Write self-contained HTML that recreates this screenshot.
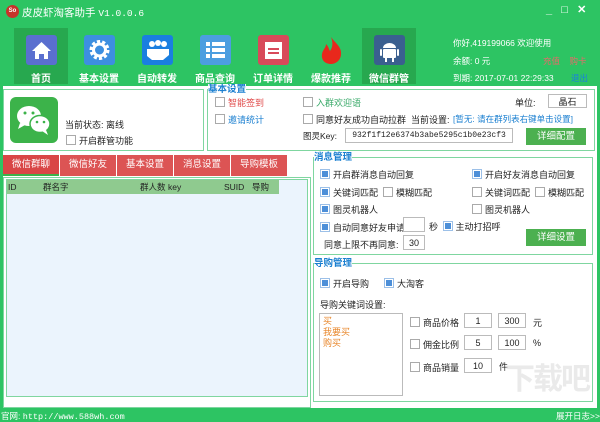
<!DOCTYPE html>
<html><head><meta charset="utf-8"><style>
*{margin:0;padding:0;box-sizing:border-box}
body{width:600px;height:422px;overflow:hidden;background:#2dc463;font-family:"Liberation Sans","Noto Sans CJK SC",sans-serif;font-size:9px;color:#222;position:relative;white-space:nowrap}
.a{position:absolute}
.w{color:#fff}
.nav{position:absolute;top:28px;width:54px;height:56px;text-align:center;color:#fff;font-size:10px;font-weight:bold}
.nav .ic{position:absolute;left:12px;top:7px;width:31px;height:30px;border-radius:3px}
.nav .lb{position:absolute;left:0;width:54px;top:42px}
.box{position:absolute;border:1px solid #7fd6a0;background:#fff}
.cb{display:inline-block;width:10px;height:10px;border:1px solid #aaa;background:#fff;vertical-align:-1px;margin-right:3px}
.cb.on{border-color:#9cc0e8;background:#4d8fd8;box-shadow:inset 0 0 0 1px #fff}
.inp{position:absolute;border:1px solid #bbb;background:#fff;text-align:center;font-size:9px;line-height:14px}
.btn{position:absolute;background:#4cb050;color:#fff;text-align:center;font-size:9.5px}
.tab{position:absolute;top:155px;height:21px;width:56px;background:#dc5454;color:#fff;text-align:center;line-height:20px;font-size:9.5px}
.tt{position:absolute;color:#1a7fd0;font-weight:bold;font-size:9.5px;background:#fff;line-height:11px}
</style></head><body>
<div class="a" style="left:6px;top:5px;width:13px;height:13px;border-radius:50%;background:#c8322a;color:#fff;font-size:6px;line-height:13px;text-align:center;font-weight:bold">So</div>
<div class="a w" style="left:22px;top:5px;font-size:10.5px">皮皮虾淘客助手 <span style="font-family:'Liberation Mono',monospace;font-size:9.5px">V1.0.0.6</span></div>
<div class="a w" style="left:546px;top:3px;font-size:11px;font-weight:bold">_&nbsp;&nbsp;&nbsp;□&nbsp;&nbsp;&nbsp;✕</div>

<div class="nav" style="left:14px;background:#27a84f"><div class="ic" style="background:#5a6fcf"><svg width="31" height="30"><path d="M15.5 7 L25 16 L22 16 L22 24 L18 24 L18 19 L13 19 L13 24 L9 24 L9 16 L6 16 Z" fill="#fff"/></svg></div><div class="lb">首页</div></div>
<div class="nav" style="left:72px"><div class="ic" style="background:#3d8fe0"><svg width="31" height="30"><circle cx="15.5" cy="15" r="8" fill="none" stroke="#fff" stroke-width="4" stroke-dasharray="3 2"/><circle cx="15.5" cy="15" r="6" fill="none" stroke="#fff" stroke-width="3"/></svg></div><div class="lb">基本设置</div></div>
<div class="nav" style="left:130px"><div class="ic" style="background:#1a7fe0"><svg width="31" height="30"><circle cx="10" cy="9" r="3" fill="#fff"/><circle cx="16" cy="8" r="3" fill="#fff"/><circle cx="22" cy="9" r="3" fill="#fff"/><path d="M5 14h22v6l-6 5H10l-5-4z" fill="#fff"/></svg></div><div class="lb">自动转发</div></div>
<div class="nav" style="left:188px"><div class="ic" style="background:#4c9ee0"><svg width="31" height="30"><rect x="6" y="7" width="4" height="4" fill="#fff"/><rect x="12" y="7" width="13" height="4" fill="#fff"/><rect x="6" y="13" width="4" height="4" fill="#fff"/><rect x="12" y="13" width="13" height="4" fill="#fff"/><rect x="6" y="19" width="4" height="4" fill="#fff"/><rect x="12" y="19" width="13" height="4" fill="#fff"/></svg></div><div class="lb">商品查询</div></div>
<div class="nav" style="left:246px"><div class="ic" style="background:#d84a5a"><svg width="31" height="30"><rect x="7" y="7" width="17" height="17" fill="#fff"/><rect x="10" y="13" width="11" height="2" fill="#d84a5a"/><rect x="10" y="17" width="11" height="2" fill="#d84a5a"/></svg></div><div class="lb">订单详情</div></div>
<div class="nav" style="left:304px"><div class="ic" style="background:none"><svg width="31" height="30"><path d="M15 2 C20 9 26 12 25 20 C24 27 18 29 15 29 C10 29 5 26 6 19 C7 14 10 13 10 9 C13 12 13 15 14 16 C17 12 17 7 15 2Z" fill="#e8281c"/></svg></div><div class="lb">爆款推荐</div></div>
<div class="nav" style="left:362px;background:#27a84f"><div class="ic" style="background:#3a5f8f"><svg width="31" height="30"><path d="M9 13a6.5 5 0 0 1 13 0z" fill="#fff"/><rect x="9" y="14" width="13" height="9" rx="1" fill="#fff"/><rect x="6" y="14" width="2" height="7" rx="1" fill="#fff"/><rect x="23" y="14" width="2" height="7" rx="1" fill="#fff"/><rect x="11" y="23" width="2" height="4" fill="#fff"/><rect x="18" y="23" width="2" height="4" fill="#fff"/></svg></div><div class="lb">微信群管</div></div>

<div class="a w" style="left:453px;top:37px;font-size:8.5px">你好,419199066 欢迎使用</div>
<div class="a w" style="left:453px;top:55px;font-size:8.5px">余额: 0 元</div>
<div class="a" style="left:543px;top:55px;font-size:8.5px;color:#e86a6a">充值&nbsp;&nbsp;&nbsp;&nbsp;购卡</div>
<div class="a w" style="left:453px;top:72px;font-size:8.5px">到期: 2017-07-01 22:29:33</div>
<div class="a" style="left:571px;top:72px;font-size:8.5px;color:#1a7fe0">退出</div>

<div class="a" style="left:3px;top:86px;width:594px;height:322px;background:#fff"></div>

<div class="box" style="left:3px;top:89px;width:201px;height:62px"></div>
<div class="a" style="left:10px;top:97px;width:48px;height:46px;background:#3cb34a;border-radius:6px"><svg width="48" height="46"><ellipse cx="19" cy="19" rx="12" ry="10" fill="#fff"/><path d="M10 26 L8 32 L15 28z" fill="#fff"/><ellipse cx="30" cy="27" rx="10" ry="8.5" fill="#fff" stroke="#3cb34a" stroke-width="1.5"/><path d="M36 33 L38 38 L32 34z" fill="#fff"/><circle cx="15" cy="16" r="1.5" fill="#3cb34a"/><circle cx="23" cy="16" r="1.5" fill="#3cb34a"/><circle cx="27" cy="25" r="1.3" fill="#3cb34a"/><circle cx="34" cy="25" r="1.3" fill="#3cb34a"/></svg></div>
<div class="a" style="left:65px;top:118px">当前状态: 离线</div>
<div class="a" style="left:66px;top:134px"><span class="cb"></span>开启群管功能</div>

<div class="box" style="left:207px;top:89px;width:388px;height:62px"></div>
<div class="tt" style="left:208px;top:84px">基本设置</div>
<div class="a" style="left:215px;top:96px;color:#e04848"><span class="cb"></span>智能签到</div>
<div class="a" style="left:215px;top:113px;color:#1a7fd0"><span class="cb"></span>邀请统计</div>
<div class="a" style="left:303px;top:96px;color:#3aaa6a"><span class="cb"></span>入群欢迎语</div>
<div class="a" style="left:303px;top:113px"><span class="cb"></span>同意好友成功自动拉群&nbsp; 当前设置:</div>
<div class="a" style="left:453px;top:113px;color:#1a7fd0;font-size:8.5px">[暂无: 请在群列表右键单击设置]</div>
<div class="a" style="left:515px;top:96px">单位:</div>
<div class="inp" style="left:548px;top:94px;width:39px;height:14px">晶石</div>
<div class="a" style="left:303px;top:130px;font-size:8.5px">图灵Key:</div>
<div class="inp" style="left:345px;top:128px;width:168px;height:15px;font-family:'Liberation Mono',monospace;font-size:8px">932f1f12e6374b3abe5295c1b0e23cf3</div>
<div class="btn" style="left:526px;top:128px;width:60px;height:17px;line-height:17px">详细配置</div>

<div class="tab" style="left:3px;background:#d94646;border-bottom:2px solid #3cb34a">微信群聊</div>
<div class="tab" style="left:60px">微信好友</div>
<div class="tab" style="left:117px">基本设置</div>
<div class="tab" style="left:174px">消息设置</div>
<div class="tab" style="left:231px">导购模板</div>

<div class="box" style="left:3px;top:177px;width:308px;height:231px"></div>
<div class="a" style="left:6px;top:179px;width:302px;height:218px;border:1px solid #7fd6a0;background:#ebf4fd"></div>
<div class="a" style="left:7px;top:180px;width:272px;height:14px;background:#8fca8f;font-size:8.5px;line-height:14px">
<span class="a" style="left:1px">ID</span><span class="a" style="left:36px">群名字</span><span class="a" style="left:133px">群人数</span><span class="a" style="left:161px">key</span><span class="a" style="left:217px">SUID</span><span class="a" style="left:245px">导购</span></div>

<div class="box" style="left:313px;top:157px;width:280px;height:98px"></div>
<div class="tt" style="left:314px;top:152px">消息管理</div>
<div class="a" style="left:320px;top:168px"><span class="cb on"></span>开启群消息自动回复</div>
<div class="a" style="left:472px;top:168px"><span class="cb on"></span>开启好友消息自动回复</div>
<div class="a" style="left:320px;top:186px"><span class="cb on"></span>关键词匹配&nbsp;&nbsp;<span class="cb"></span>模糊匹配</div>
<div class="a" style="left:472px;top:186px"><span class="cb"></span>关键词匹配&nbsp;&nbsp;<span class="cb"></span>模糊匹配</div>
<div class="a" style="left:320px;top:203px"><span class="cb on"></span>图灵机器人</div>
<div class="a" style="left:472px;top:203px"><span class="cb"></span>图灵机器人</div>
<div class="a" style="left:320px;top:221px"><span class="cb on"></span>自动同意好友申请</div>
<div class="inp" style="left:403px;top:217px;width:22px;height:15px"></div>
<div class="a" style="left:429px;top:220px">秒 <span class="cb on" style="margin-left:2px"></span>主动打招呼</div>
<div class="a" style="left:324px;top:238px">同意上限不再同意:</div>
<div class="inp" style="left:403px;top:235px;width:22px;height:15px">30</div>
<div class="btn" style="left:526px;top:229px;width:60px;height:17px;line-height:17px">详细设置</div>

<div class="box" style="left:313px;top:263px;width:280px;height:139px"></div>
<div class="tt" style="left:314px;top:258px">导购管理</div>
<div class="a" style="left:320px;top:277px"><span class="cb on"></span>开启导购&nbsp;&nbsp;&nbsp;&nbsp;&nbsp;&nbsp;<span class="cb on"></span>大淘客</div>
<div class="a" style="left:320px;top:298px">导购关键词设置:</div>
<div class="a" style="left:319px;top:313px;width:84px;height:83px;border:1px solid #bbb;color:#e8862a;line-height:11px;padding:2px 3px">买<br>我要买<br>购买</div>
<div class="a" style="left:410px;top:316px"><span class="cb"></span>商品价格</div>
<div class="inp" style="left:464px;top:313px;width:28px;height:15px">1</div>
<div class="inp" style="left:498px;top:313px;width:28px;height:15px">300</div>
<div class="a" style="left:533px;top:316px">元</div>
<div class="a" style="left:410px;top:338px"><span class="cb"></span>佣金比例</div>
<div class="inp" style="left:464px;top:335px;width:28px;height:15px">5</div>
<div class="inp" style="left:498px;top:335px;width:28px;height:15px">100</div>
<div class="a" style="left:533px;top:338px">%</div>
<div class="a" style="left:410px;top:361px"><span class="cb"></span>商品销量</div>
<div class="inp" style="left:464px;top:358px;width:28px;height:15px">10</div>
<div class="a" style="left:499px;top:360px">件</div>
<div class="a" style="left:505px;top:360px;font-size:30px;line-height:40px;color:#ddd;opacity:.6;font-weight:bold;letter-spacing:-2px">下载吧</div>

<div class="a w" style="left:1px;top:410px;font-size:8.5px">官网: <span style="font-family:'Liberation Mono',monospace">http://www.588wh.com</span></div>
<div class="a w" style="left:556px;top:410px;font-size:8.5px">展开日志&gt;&gt;</div>
</body></html>
